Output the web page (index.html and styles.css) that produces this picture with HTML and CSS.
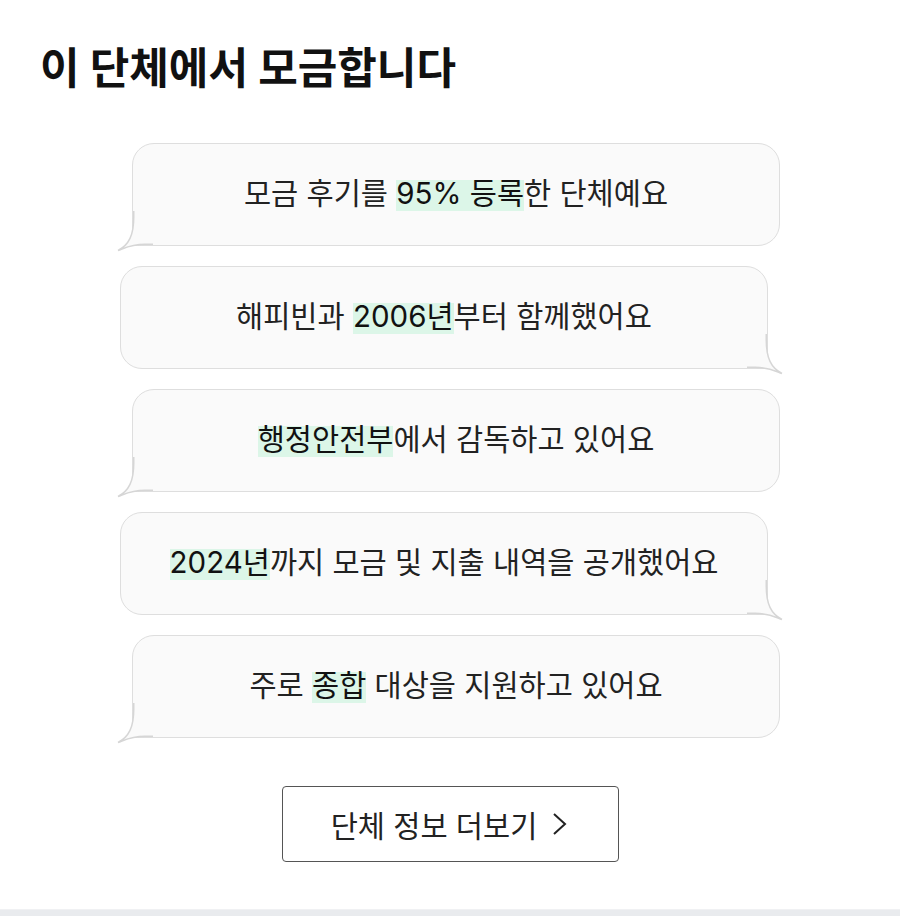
FILE: index.html
```html
<!DOCTYPE html>
<html lang="ko">
<head>
    <meta charset="UTF-8">
    <meta name="viewport" content="width=device-width, initial-scale=1.0">
    <title>이 단체에서 모금합니다</title>
    <link rel="stylesheet" href="styles.css">
</head>
<body>
    <div class="section">
        <h1 class="title">이 단체에서 모금합니다</h1>

        <div class="bubbles">
            <div class="bubble left">
                <p>모금 후기를 <span class="mark">95% 등록</span>한 단체예요</p>
                <svg class="tail" viewBox="0 0 36 44" width="36" height="44">
                    <path class="tail-fill" d="M16.75 0 L16.75 6 C16.75 24 12 34 1 39.5 C8 37 14 33.25 28 33.25 L36 33.25 L36 0 Z"/>
                    <path class="tail-line" d="M16.75 0 L16.75 6 C16.75 24 12 34 1 39.5 C8 37 14 33.25 28 33.25 L36 33.25"/>
                </svg>
            </div>
            <div class="bubble right">
                <p>해피빈과 <span class="mark">2006년</span>부터 함께했어요</p>
                <svg class="tail" viewBox="0 0 36 44" width="36" height="44">
                    <path class="tail-fill" d="M16.75 0 L16.75 6 C16.75 24 12 34 1 39.5 C8 37 14 33.25 28 33.25 L36 33.25 L36 0 Z"/>
                    <path class="tail-line" d="M16.75 0 L16.75 6 C16.75 24 12 34 1 39.5 C8 37 14 33.25 28 33.25 L36 33.25"/>
                </svg>
            </div>
            <div class="bubble left">
                <p><span class="mark">행정안전부</span>에서 감독하고 있어요</p>
                <svg class="tail" viewBox="0 0 36 44" width="36" height="44">
                    <path class="tail-fill" d="M16.75 0 L16.75 6 C16.75 24 12 34 1 39.5 C8 37 14 33.25 28 33.25 L36 33.25 L36 0 Z"/>
                    <path class="tail-line" d="M16.75 0 L16.75 6 C16.75 24 12 34 1 39.5 C8 37 14 33.25 28 33.25 L36 33.25"/>
                </svg>
            </div>
            <div class="bubble right">
                <p><span class="mark">2024년</span>까지 모금 및 지출 내역을 공개했어요</p>
                <svg class="tail" viewBox="0 0 36 44" width="36" height="44">
                    <path class="tail-fill" d="M16.75 0 L16.75 6 C16.75 24 12 34 1 39.5 C8 37 14 33.25 28 33.25 L36 33.25 L36 0 Z"/>
                    <path class="tail-line" d="M16.75 0 L16.75 6 C16.75 24 12 34 1 39.5 C8 37 14 33.25 28 33.25 L36 33.25"/>
                </svg>
            </div>
            <div class="bubble left">
                <p>주로 <span class="mark">종합</span> 대상을 지원하고 있어요</p>
                <svg class="tail" viewBox="0 0 36 44" width="36" height="44">
                    <path class="tail-fill" d="M16.75 0 L16.75 6 C16.75 24 12 34 1 39.5 C8 37 14 33.25 28 33.25 L36 33.25 L36 0 Z"/>
                    <path class="tail-line" d="M16.75 0 L16.75 6 C16.75 24 12 34 1 39.5 C8 37 14 33.25 28 33.25 L36 33.25"/>
                </svg>
            </div>
        </div>

        <div class="more-wrap">
            <a class="more-btn" href="#">
                단체 정보 더보기
                <svg class="chevron" viewBox="0 0 20 26" width="20" height="26">
                    <path d="M5 3 L16 13 L5 23"/>
                </svg>
            </a>
        </div>
    </div>
    <div class="divider"></div>
</body>
</html>
```

FILE: styles.css
```css
body {
    margin: 0;
    background-color: #ffffff;
    font-family: Inter, "Noto Sans CJK KR", sans-serif;
    color: #222222;
}
.section {
    padding: 42px 40px 47px;
}
.title {
    margin: 0;
    font-size: 43px;
    line-height: 53px;
    font-weight: 700;
    color: #111111;
}
.bubbles {
    display: flex;
    flex-direction: column;
    gap: 20px;
    margin-top: 48px;
    width: 660px;
    margin-left: 80px;
}
.bubble {
    position: relative;
    width: 648px;
    height: 103px;
    box-sizing: border-box;
    padding-bottom: 4px;
    background-color: #fafafa;
    border: 1.5px solid #dedede;
    border-radius: 22px;
    display: flex;
    justify-content: center;
    align-items: center;
}
.bubble p {
    margin: 0;
    font-size: 29.5px;
    line-height: 38px;
}
.bubble.left {
    margin-left: 12px;
    border-bottom-left-radius: 0;
}
.bubble.right {
    border-bottom-right-radius: 0;
}
.tail {
    position: absolute;
    bottom: -10px;
}
.left .tail {
    left: -16px;
}
.right .tail {
    right: -16px;
    transform: scaleX(-1);
}
.tail-fill {
    fill: #fafafa;
}
.tail-line {
    fill: none;
    stroke: #d6d6d6;
    stroke-width: 1.5;
}
.mark {
    background: linear-gradient(transparent 14%, #dcf6e8 14%);
    color: #111111;
}
.more-wrap {
    display: flex;
    justify-content: center;
    margin-top: 48px;
}
.more-btn {
    display: flex;
    align-items: center;
    justify-content: center;
    gap: 12px;
    width: 337px;
    height: 76px;
    box-sizing: border-box;
    border: 1.5px solid #555555;
    border-radius: 4px;
    font-size: 29.5px;
    color: #222222;
    text-decoration: none;
}
.chevron path {
    fill: none;
    stroke: #222222;
    stroke-width: 2;
}
.divider {
    height: 6px;
    border-top: 1px solid #f0f1f3;
    background-color: #e9ebee;
}
```
